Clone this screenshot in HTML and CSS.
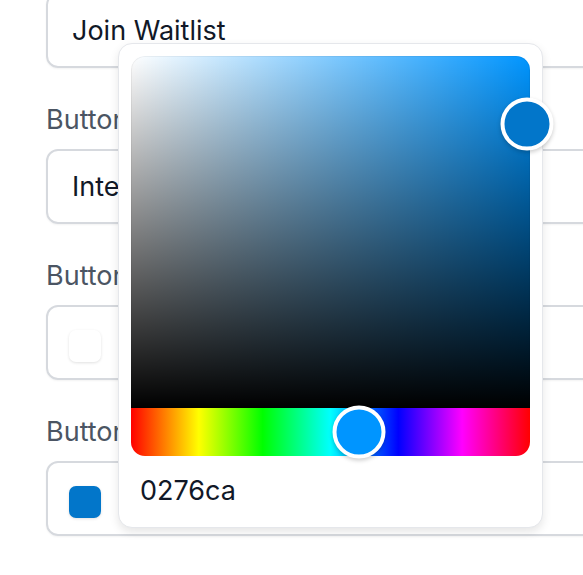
FILE: index.html
```html
<!DOCTYPE html>
<html lang="en">
<head>
    <meta charset="UTF-8">
    <meta name="viewport" content="width=device-width, initial-scale=1.0">
    <title>Button Settings</title>
    <link rel="stylesheet" href="styles.css">
</head>
<body>
    <div class="form">
        <div class="field-box">Join Waitlist</div>

        <div class="label">Button Font</div>
        <div class="field-box">Inter</div>

        <div class="label">Button Text Color</div>
        <div class="field-box">
            <span class="swatch swatch-white"></span>
        </div>

        <div class="label">Button Color</div>
        <div class="field-box">
            <span class="swatch swatch-blue"></span>
        </div>
    </div>

    <div class="picker">
        <div class="saturation">
            <div class="pointer sat-pointer"></div>
        </div>
        <div class="hue">
            <div class="pointer hue-pointer"></div>
        </div>
        <div class="hex-value">0276ca</div>
    </div>
</body>
</html>
```

FILE: styles.css
```css
body {
    font-family: 'Inter', 'Noto Sans', sans-serif;
    background-color: #fff;
    margin: 0;
    padding: 0;
    overflow: hidden;
    position: relative;
    height: 575px;
}
.form {
    width: 640px;
    margin-top: -7px;
    padding-left: 46px;
    display: flex;
    flex-direction: column;
}
.field-box {
    height: 75px;
    box-sizing: border-box;
    border: 2px solid #d6d9de;
    border-radius: 12px;
    box-shadow: 0 1px 2px rgba(0, 0, 0, 0.05);
    padding-left: 24px;
    display: flex;
    align-items: center;
    font-size: 27px;
    color: #111827;
}
.label {
    margin: 35px 0 12px;
    font-size: 27px;
    line-height: 34px;
    color: #4b5563;
}
.swatch {
    width: 32px;
    height: 32px;
    border-radius: 7px;
    margin-left: -3px;
    margin-top: 6px;
    box-shadow: 0 1px 3px rgba(0, 0, 0, 0.12);
}
.swatch-white {
    background: #fff;
}
.swatch-blue {
    background: #0276ca;
}
.picker {
    position: absolute;
    left: 118px;
    top: 43px;
    width: 425px;
    height: 485px;
    box-sizing: border-box;
    padding: 12px;
    background: #fff;
    border: 1.5px solid #e5e7eb;
    border-radius: 14px;
    box-shadow: 0 4px 10px rgba(0, 0, 0, 0.1);
}
.saturation {
    position: relative;
    height: 352px;
    border-radius: 14px 14px 0 0;
    background-color: hsl(205, 100%, 50%);
    background-image: linear-gradient(0deg, #000, transparent),
        linear-gradient(90deg, #fff, rgba(255, 255, 255, 0));
    box-shadow: inset 0 0 0 1px rgba(0, 0, 0, 0.05);
}
.hue {
    position: relative;
    height: 48px;
    border-radius: 0 0 14px 14px;
    background: linear-gradient(90deg, red 0, #ff0 17%, #0f0 33%, #0ff 50%, #00f 67%, #f0f 83%, red);
}
.pointer {
    position: absolute;
    width: 53px;
    height: 53px;
    box-sizing: border-box;
    border: 4px solid #fff;
    border-radius: 50%;
    box-shadow: 0 2px 4px rgba(0, 0, 0, 0.2);
    transform: translate(-50%, -50%);
}
.sat-pointer {
    left: 396px;
    top: 68px;
    background: #0276ca;
}
.hue-pointer {
    left: 228px;
    top: 24px;
    background: hsl(205, 100%, 50%);
}
.hex-value {
    padding: 18px 0 0 9px;
    font-size: 27px;
    color: #111827;
}
```
